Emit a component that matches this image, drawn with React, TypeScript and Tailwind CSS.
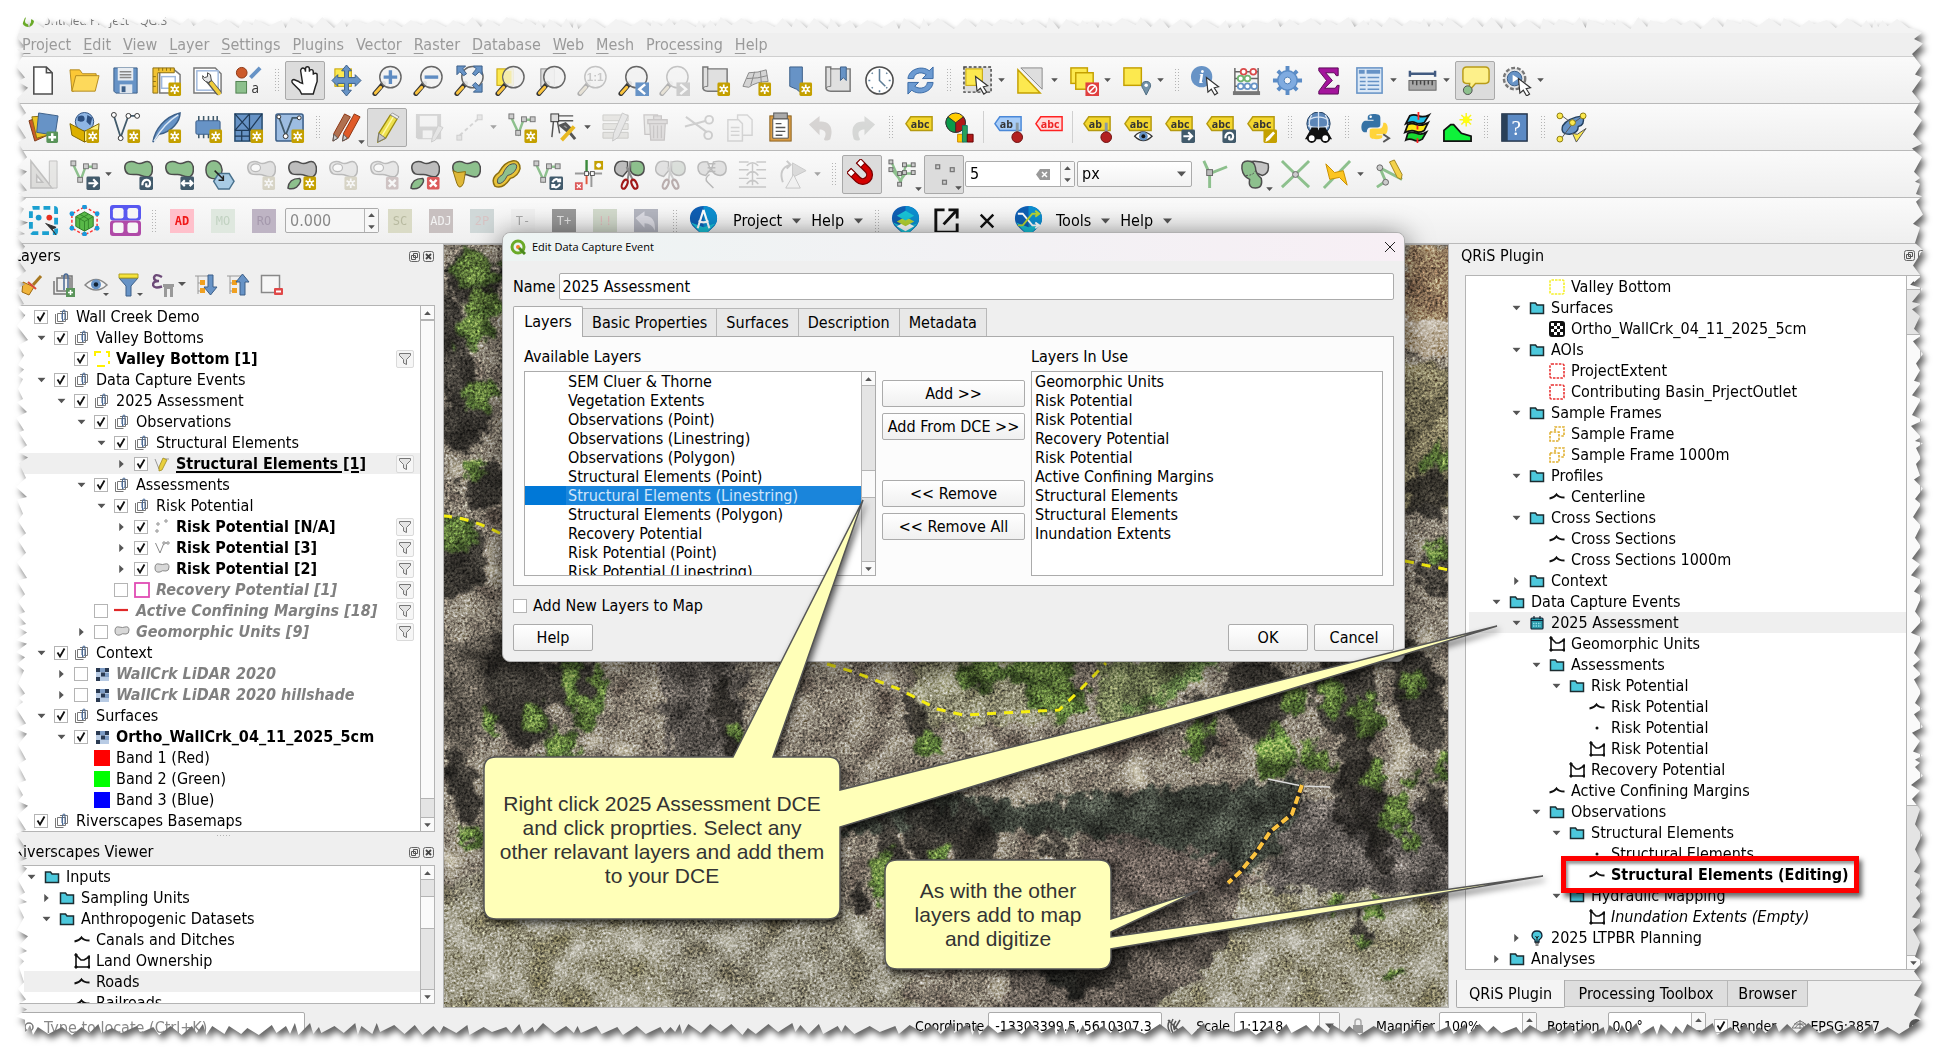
import type { ReactNode } from "react";

/* ---------- icon building blocks (32 x 32 grid) ---------- */

const BLUE = "#6793c6";
const GREEN = "#8dc08d";
const INK = "#4d4d4d";
const GOLD = "#fce94f";

function StarBadge() {
  return (
    <g>
      <rect x="18" y="18" width="13" height="14" rx="1.5" fill="#c4a000" />
      <path d="M24.5 20v10M20.2 22.5l8.6 5M20.2 27.5l8.6-5" stroke="#fff" strokeWidth="1.8" />
      <circle cx="24.5" cy="25" r="2.6" fill="#fff" />
      <circle cx="24.5" cy="25" r="1.2" fill="#c4a000" />
    </g>
  );
}

function SteelBadge({ d }: { d: string }) {
  return (
    <g>
      <rect x="18" y="18" width="14" height="14" rx="1.5" fill="#415a6b" />
      <path d={d} fill="none" stroke="#fff" strokeWidth="2.2" />
    </g>
  );
}

function RedBadge() {
  return (
    <g>
      <rect x="18.5" y="18.5" width="13" height="13" rx="1.5" fill="#dc5a5a" />
      <path d="M21.5 21.5l7 7M28.5 21.5l-7 7" stroke="#fff" strokeWidth="2.5" />
    </g>
  );
}

function Lens({ children }: { children?: ReactNode }) {
  return (
    <g>
      <path d="M12 19L3 29.5" stroke="#333" strokeWidth="5" strokeLinecap="round" />
      <path d="M9 23L3.5 29" stroke="#fcc53e" strokeWidth="3" strokeLinecap="round" />
      <circle cx="19" cy="12.5" r="11" fill="#f2f2f2" fillOpacity="0.9" stroke="#666" strokeWidth="1.5" />
      {children}
    </g>
  );
}

function Cursor({ x, y }: { x: number; y: number }) {
  return <path d={`M${x} ${y}l1.5 15 3.5-3 3.5 6 3-2-3.5-5.5 4.5-1z`} fill="#fff" stroke="#333" strokeWidth="1.2" />;
}

function Tag({ fill = "#f3d62e", stroke = "#b59a10", color = "#333", text = "abc" }: { fill?: string; stroke?: string; color?: string; text?: string }) {
  return (
    <g>
      <path d="M2 12L7 5h22v14H7z" fill={fill} stroke={stroke} strokeWidth="1.5" />
      <text x="7" y="16" fontSize="11" fontWeight="700" fill={color} fontFamily="Open Sans, sans-serif">{text}</text>
    </g>
  );
}

function Blob({ fill = GREEN, hole = false }: { fill?: string; hole?: boolean }) {
  return (
    <g>
      <path d="M3 10C2 3 9 1 15 4s8-3 13-1c5 3 4 13 0 15-5 2-8-2-13-2C9 16 4 17 3 10z" fill={fill} stroke={INK} strokeWidth="1.6" />
      {hole ? <ellipse cx="11" cy="9" rx="5" ry="4" fill="#fff" stroke={INK} strokeWidth="1.2" /> : null}
    </g>
  );
}

function Nodes() {
  return (
    <g>
      <path d="M4 5l8 17 5-14h10" fill="none" stroke={GREEN} strokeWidth="2.5" />
      {[[2, 2], [9, 19], [15, 5], [24, 5]].map(([x, y]) => (
        <rect key={`${x}-${y}`} x={x} y={y} width="5" height="5" fill="#ccc" stroke="#777" />
      ))}
    </g>
  );
}

function Pin() {
  return (
    <g>
      <path d="M25 11v10" stroke="#8a9aa5" strokeWidth="3" />
      <circle cx="25" cy="26" r="5.5" fill="#b32020" stroke="#701010" />
    </g>
  );
}

function Drop({ children }: { children: ReactNode }) {
  return (
    <g>
      <path d="M16 1c8 0 14 5 14 13 0 8-7 11-14 18C9 25 2 22 2 14 2 6 8 1 16 1z" fill="#0f5fb4" />
      <path d="M16 1c8 0 14 5 14 13 0 8-7 11-14 18z" fill="#0c8fd0" />
      <path d="M3 18l10 11 3 3 3-3 9-10-12 4z" fill="#19c3d8" />
      {children}
    </g>
  );
}

const icons: Record<string, ReactNode> = {
  "New project": <path d="M6 2h13l6 6v22H6zM19 2v6h6" fill="#fff" stroke={INK} strokeWidth="1.6" />,
  "Open project": (
    <g stroke="#b38a20">
      <path d="M1 5h10l3 4h14v4H8L5 27H3z" fill="#fbc735" />
      <path d="M7 11h24l-4 16H3z" fill="#fdd95b" />
    </g>
  ),
  "Save project": (
    <g>
      <path d="M4 3h24v26H6l-2-2z" fill={BLUE} stroke="#3c5f88" />
      <rect x="8" y="3" width="16" height="13" fill="#e9edf2" />
      <path d="M10 7h12M10 10h12M10 13h12" stroke="#888" strokeWidth="1.5" />
      <rect x="10" y="20" width="13" height="9" fill="#dfe6ee" />
      <rect x="12" y="22" width="4" height="6" fill="#3c5f88" />
    </g>
  ),
  "New print layout": (
    <g>
      <path d="M9 4h14l7 6v19H9z" fill="#fff" stroke="#777" strokeWidth="1.5" />
      <path d="M2 3h22v5H7v21H2z" fill="#f1c232" stroke="#8a6d10" />
      <path d="M8 3v3M12 3v3M16 3v3M20 3v3M2 12h3M2 17h3M2 22h3" stroke="#8a6d10" />
      <rect x="11" y="12" width="14" height="12" fill="none" stroke="#9fb8dd" strokeWidth="1.5" />
      <StarBadge />
    </g>
  ),
  "Layout manager": (
    <g>
      <path d="M2 3h22l6 6v20H2z" fill="#fff" stroke="#777" strokeWidth="1.5" />
      <rect x="5" y="6" width="22" height="20" fill="none" stroke="#9fb8dd" strokeWidth="1.5" />
      <path d="M17 16l10 12" stroke="#555" strokeWidth="6" strokeLinecap="round" />
      <path d="M20 19l8 10" stroke="#f0cd3c" strokeWidth="4" strokeLinecap="round" />
      <path d="M11 11q-1 4 3 6l3 1 3-2-1-6-3-2 0 4-3 1z" fill="#e4e4e4" stroke="#444" />
    </g>
  ),
  "Style manager": (
    <g>
      <circle cx="9" cy="8" r="5.5" fill="#cc5a2a" stroke="#8c3512" />
      <path d="M18 13L28 3" stroke={BLUE} strokeWidth="4" />
      <rect x="3" y="17" width="11" height="12" fill={GREEN} stroke="#4f7f4f" />
      <text x="19" y="29" fontSize="14" fill="#333" fontFamily="Open Sans, sans-serif">a</text>
    </g>
  ),
  "Pan map": (
    <path d="M9 17L4 15c-2 0-3 2-1 4l7 7 2 4h12l2-7 2-6V10c0-2-4-2-4 0V7c0-3-4-3-4 0V4c0-3-4-3-4 0v3c0-5-5-5-5-1l2 13-3-1z" fill="#fff" stroke="#222" strokeWidth="1.5" />
  ),
  "Pan to selection": (
    <g>
      <rect x="4" y="4" width="17" height="18" fill={GOLD} stroke="#c4a000" />
      <path d="M16 0l5 6h-3v7h7v-3l6 6-6 6v-3h-7v7h3l-5 6-5-6h3v-7H7v3l-6-6 6-6v3h7V6h-3z" fill={BLUE} stroke="#3c5f88" />
    </g>
  ),
  "Zoom in": <Lens><path d="M19 5.5v14M12 12.5h14" stroke="#5f8cc2" strokeWidth="3.5" /></Lens>,
  "Zoom out": <Lens><path d="M12 12.5h14" stroke="#5f8cc2" strokeWidth="3.5" /></Lens>,
  "Zoom full": (
    <g>
      <Lens />
      <path d="M3 1h9L9 4l4 5-3 2-4-4-3 3zM29 1h-9l3 3-4 5 3 2 4-4 3 3zM29 28h-9l3-3-4-4 3-3 4 4 3-3z" fill={BLUE} stroke="#3c5f88" />
    </g>
  ),
  "Zoom to selection": (
    <g>
      <rect x="2" y="4" width="17" height="17" fill={GOLD} stroke="#c4a000" />
      <Lens />
      <path d="M11 6a11 11 0 0 0 0 13h6V6z" fill="#f4ecac" />
    </g>
  ),
  "Zoom to layer": (
    <g>
      <rect x="5" y="4" width="14" height="18" fill="#ddd" stroke="#888" />
      <Lens />
    </g>
  ),
  "Zoom to native": (
    <g>
      <Lens />
      <text x="10" y="17" fontSize="12" fontWeight="700" fill="#777" fontFamily="Liberation Sans, sans-serif">1:1</text>
    </g>
  ),
  "Zoom last": (
    <g>
      <Lens />
      <rect x="18" y="18" width="14" height="14" fill={BLUE} />
      <path d="M28 20l-6 5 6 5" fill="none" stroke="#fff" strokeWidth="2.5" />
    </g>
  ),
  "Zoom next": (
    <g>
      <Lens />
      <rect x="18" y="18" width="14" height="14" fill="#888" />
      <path d="M22 20l6 5-6 5" fill="none" stroke="#fff" strokeWidth="2.5" />
    </g>
  ),
  "New map view": (
    <g>
      <path d="M8 4h20v23H8q-5 0-5-4V2h5z" fill="#e0e0e0" stroke="#777" strokeWidth="1.5" />
      <path d="M8 4v18q-5 0-5 3" fill="none" stroke="#777" />
      <StarBadge />
    </g>
  ),
  "New 3D map view": (
    <g>
      <path d="M8 8q10 0 18-3l2 12q-12 0-20 6l-6-1z" fill="#d4d4d4" stroke="#888" />
      <path d="M14 7l-4 14M20 6l1 13M6 14q12 0 21-3" fill="none" stroke="#888" />
      <StarBadge />
    </g>
  ),
  "New bookmark": (
    <g>
      <path d="M8 2h13v28l-6-5-7-3z" fill={BLUE} stroke="#3c5f88" />
      <StarBadge />
    </g>
  ),
  "Show bookmarks": (
    <g>
      <path d="M8 4h20v23H8q-5 0-5-4V2h5z" fill="#e0e0e0" stroke="#777" strokeWidth="1.5" />
      <path d="M8 4v18q-5 0-5 3" fill="none" stroke="#777" />
      <path d="M18 2h6v14l-3-3-3 3z" fill={BLUE} stroke="#3c5f88" />
    </g>
  ),
  "Temporal controller": (
    <g>
      <circle cx="16" cy="16" r="14" fill="#fff" stroke={INK} strokeWidth="1.6" />
      <path d="M16 4v12l6 6M4.5 16h2M25.5 16h2M16 26v2M8 8l1 1M24 8l-1 1M8 24l1-1M24 24l-1-1" fill="none" stroke="#5c7c96" strokeWidth="1.6" />
    </g>
  ),
  "Refresh": (
    <g fill="#6c9bd2" stroke="#3a6aa5">
      <path d="M3 14C4 4 18 0 25 6l4-4v12H18l4-4C16 6 9 9 9 14z" />
      <path d="M29 18C28 28 14 32 7 26l-4 4V18h11l-4 4c6 4 13 1 13-4z" />
    </g>
  ),
  "Select features": (
    <g>
      <rect x="2" y="2" width="28" height="26" fill="#ddd" stroke="#444" strokeDasharray="3 2" strokeWidth="1.5" />
      <rect x="4" y="4" width="17" height="17" fill={GOLD} stroke="#c4a000" />
      <Cursor x={14} y={12} />
    </g>
  ),
  "Select by value": (
    <g>
      <path d="M6 3h22v22z" fill="#dedede" stroke="#888" />
      <path d="M3 5l23 24H3z" fill={GOLD} stroke="#c4a000" strokeWidth="1.5" />
    </g>
  ),
  "Deselect": (
    <g>
      <rect x="3" y="3" width="17" height="16" fill={GOLD} stroke="#c4a000" strokeWidth="1.5" />
      <rect x="8" y="8" width="18" height="17" fill={GOLD} stroke="#c4a000" strokeWidth="1.5" />
      <rect x="18" y="18" width="14" height="14" fill="#e04040" />
      <circle cx="25" cy="25" r="4.5" fill="none" stroke="#fff" strokeWidth="1.6" />
      <path d="M22 28l6-6" stroke="#fff" strokeWidth="1.6" />
    </g>
  ),
  "Select by location": (
    <g>
      <rect x="3" y="3" width="18" height="18" fill={GOLD} stroke="#c4a000" strokeWidth="1.5" />
      <path d="M26 17c6 0 5 6 3 8l-3 6-3-6c-2-2-3-8 3-8z" fill="#7392a8" stroke="#4c6a80" />
      <circle cx="26" cy="21" r="1.8" fill="#fff" />
    </g>
  ),
  "Identify": (
    <g>
      <circle cx="12" cy="12" r="11" fill={BLUE} />
      <text x="9" y="19" fontSize="19" fontStyle="italic" fontWeight="700" fill="#fff" fontFamily="Liberation Serif, serif">i</text>
      <Cursor x={17} y={13} />
    </g>
  ),
  "Field calculator": (
    <g>
      <path d="M4 3v25M28 3v25M4 7h24M4 14h24M4 22h24" stroke="#666" strokeWidth="1.5" />
      <rect x="2" y="27" width="28" height="4" fill="#777" />
      {[[13, 7, "#d94a4a"], [23, 7, "#d94a4a"], [10, 14, "#6fb36f"], [17, 14, "#6fb36f"], [10, 22, "#6793c6"], [17, 22, "#6793c6"], [24, 22, "#6793c6"]].map(([x, y, c]) => (
        <circle key={`${x}-${y}`} cx={x} cy={y} r="3" fill="#fff" stroke={String(c)} strokeWidth="1.8" />
      ))}
    </g>
  ),
  "Toolbox": (
    <g>
      <path d="M16 1v30M1 16h30M6 6l20 20M26 6L6 26" stroke="#5b8cc6" strokeWidth="4" />
      <circle cx="16" cy="16" r="10" fill="#7fabe0" stroke="#5b8cc6" strokeWidth="1.5" />
      <circle cx="16" cy="16" r="3.5" fill="#f6f6f6" stroke="#4a7db8" />
    </g>
  ),
  "Statistics": <path d="M6 3h20v8h-2l-2-3H13l7 8-8 8h11l2-3h2l-1 9H6v-3l8-11-8-10z" fill="#a4149c" stroke="#5c0a58" />,
  "Attribute table": (
    <g>
      <rect x="3" y="3" width="26" height="26" fill="#dbe8f6" stroke={BLUE} strokeWidth="1.6" />
      <rect x="5" y="5" width="6" height="4" fill={BLUE} />
      <rect x="13" y="5" width="14" height="4" fill={BLUE} />
      <path d="M6 13h6M14 13h12M6 17h6M14 17h12M6 21h6M14 21h12M6 25h6M14 25h12" stroke={BLUE} strokeWidth="1.6" />
    </g>
  ),
  "Measure": (
    <g>
      <path d="M3 9h26M3 6v6M29 6v6" stroke="#415a80" strokeWidth="2.5" />
      <rect x="2" y="16" width="28" height="10" fill="#a8a8a8" stroke="#666" />
      <path d="M6 16v4M10 16v5M14 16v4M18 16v5M22 16v4M26 16v5" stroke="#444" strokeWidth="1.5" />
    </g>
  ),
  "Map tips": (
    <g>
      <path d="M7 2h19q4 0 4 4v9q0 4-4 4H16l-7 8 1-8H7q-4 0-4-4V6q0-4 4-4z" fill="#fdf08a" stroke="#b89b18" strokeWidth="1.5" />
      <circle cx="8" cy="26" r="4.5" fill={GREEN} stroke={INK} />
    </g>
  ),
  "Run action": (
    <g>
      <circle cx="14" cy="14" r="11" fill="#e6e6e6" stroke="#777" strokeWidth="2.5" strokeDasharray="4 2" />
      <circle cx="14" cy="14" r="7.5" fill={BLUE} stroke="#3c5f88" />
      <path d="M12 10l6 4-6 4z" fill="#fff" />
      <Cursor x={18} y={14} />
    </g>
  ),
  "Data source manager": (
    <g>
      <path d="M1 9l14-5 5 20-13 6z" fill="#cc5a2a" stroke="#7c3a18" />
      <path d="M4 5l14-1 2 20-11 3z" fill="#edc626" stroke="#8a6d10" />
      <path d="M11 1l20 3-3 20-19-3z" fill={BLUE} stroke="#3c5f88" />
      <rect x="19" y="20" width="12" height="12" rx="1.5" fill="#5a945a" />
      <path d="M25 22v8M21 26h8" stroke="#fff" strokeWidth="2.5" />
    </g>
  ),
  "New GeoPackage": (
    <g>
      <circle cx="16" cy="10" r="9.5" fill="#8fb6e4" stroke="#2c4f80" />
      <path d="M9 5q6-3 7 1t-4 4l-3-1zM19 3l5 3-2 8-4-4z" fill="#2c4f80" />
      <path d="M1 12l15 8v11L3 24z" fill="#dcb000" stroke="#806600" />
      <path d="M31 12l-15 8v11l14-7z" fill="#fff07a" stroke="#806600" />
      <StarBadge />
    </g>
  ),
  "New shapefile": (
    <g>
      <path d="M4 4l7 22L19 4h8" fill="none" stroke="#415a6b" strokeWidth="1.8" />
      <circle cx="4" cy="3" r="2.5" fill="#fff" stroke="#333" />
      <circle cx="19" cy="4" r="2.5" fill="#fff" stroke="#333" />
      <circle cx="28" cy="4" r="2.5" fill="#fff" stroke="#333" />
      <circle cx="11" cy="27" r="2.5" fill="#fff" stroke="#333" />
      <StarBadge />
    </g>
  ),
  "New SpatiaLite": (
    <g>
      <path d="M2 31C4 18 14 5 30 1c0 8-8 20-22 22z" fill={BLUE} stroke="#3c5f88" strokeWidth="1.5" />
      <path d="M3 30C10 18 18 9 28 3" fill="none" stroke="#dbe8f6" strokeWidth="1.5" />
      <StarBadge />
    </g>
  ),
  "New temporary layer": (
    <g>
      <path d="M7 4v6M12 4v6M17 4v6M22 4v6M26 4v6M7 20v7M12 20v7M17 20v7" stroke="#415a6b" strokeWidth="1.6" />
      <rect x="4" y="9" width="25" height="14" rx="1.5" fill={BLUE} stroke="#3c5f88" />
      <StarBadge />
    </g>
  ),
  "New mesh": (
    <g>
      <rect x="2" y="2" width="28" height="28" fill={BLUE} stroke="#2c4f70" strokeWidth="1.6" />
      <path d="M2 19h28M17 2v28M2 2l15 17M17 2L2 19M30 2L17 19M2 25h15M9 19v11" stroke="#1f3a58" strokeWidth="1.3" />
      <StarBadge />
    </g>
  ),
  "New virtual layer": (
    <g>
      <rect x="2" y="2" width="28" height="28" rx="2" fill="#9dbde2" stroke="#3c5f88" strokeWidth="1.6" />
      <path d="M5 5l7 19L19 6h7" fill="none" stroke="#415a6b" strokeWidth="1.8" />
      <circle cx="12" cy="25" r="2.5" fill="#fff" stroke="#333" />
      <circle cx="5" cy="5" r="2" fill="#fff" stroke="#333" />
      <circle cx="26" cy="6" r="2" fill="#fff" stroke="#333" />
      <StarBadge />
    </g>
  ),
  "Current edits": (
    <g stroke="#8c3512">
      <path d="M14 2l6 3L7 27l-5 3 1-8z" fill="#b07050" />
      <path d="M24 2l6 3-12 22-6 3 1-8z" fill="#e05a28" />
      <path d="M3 23l4 4-5 3zM13 23l4 4-5 3z" fill="#ccc" stroke="#555" />
    </g>
  ),
  "Toggle editing": (
    <g>
      <path d="M19 3l7 4L14 27l-8 4 1-9z" fill="#ede04c" stroke="#9a8a10" strokeWidth="1.3" />
      <path d="M22 5L10 25" stroke="#fff8a8" strokeWidth="1.5" />
      <path d="M7 22l7 5-8 4z" fill="#c8c8c8" stroke="#777" />
      <path d="M19 3l2-2 7 4-2 2z" fill="#eee" stroke="#999" />
    </g>
  ),
  "Save edits": (
    <g>
      <path d="M3 2h26v26H5l-2-2z" fill="#999" />
      <rect x="7" y="4" width="18" height="11" fill="#eee" />
      <rect x="10" y="19" width="10" height="8" fill="#eee" />
      <path d="M26 14l5 2-8 13-4 2 1-5z" fill="#ccc" stroke="#888" />
    </g>
  ),
  "Digitize with segment": (
    <g>
      <path d="M6 24L25 7" stroke="#999" strokeWidth="2" strokeDasharray="4 3" />
      <rect x="3" y="24" width="5" height="5" fill="#ccc" stroke="#888" />
      <rect x="24" y="3" width="5" height="5" fill="#ccc" stroke="#888" />
    </g>
  ),
  "Add line feature": <g><Nodes /><StarBadge /></g>,
  "Vertex tool": (
    <g>
      <path d="M6 6l-2 20M9 6l3 16M8 4h18M8 9h18" stroke="#555" strokeWidth="1.5" />
      <rect x="3" y="2" width="8" height="8" fill="#ddd" stroke="#333" />
      <path d="M13 14l5-2 4 4-3 3zM19 17l9 11" stroke="#555" strokeWidth="3" fill="#999" />
      <path d="M27 15L14 29" stroke="#e8b820" strokeWidth="4" />
    </g>
  ),
  "Modify attributes": (
    <g>
      <path d="M2 3h26v6H2zM2 12h26v6H2zM2 21h26v6H2z" fill="#cfc9a8" stroke="#8a8668" />
      <path d="M22 1l6 3-10 22-6 4 1-8z" fill="#ccc" stroke="#777" />
    </g>
  ),
  "Delete selected": (
    <g fill="#c8b0b0" stroke="#8a7070" strokeWidth="1.3">
      <path d="M2 3h14v20H3z" fill="#dad6ca" />
      <path d="M6 8h20v4H6zM8 12h16l-1 17H9zM12 8V4h8v4" />
      <path d="M12 14v13M16 14v13M20 14v13" />
    </g>
  ),
  "Cut": (
    <g fill="none" stroke="#888" strokeWidth="2">
      <path d="M3 5l22 16M2 15l22-6" />
      <circle cx="27" cy="8" r="4" />
      <circle cx="26" cy="24" r="4" />
    </g>
  ),
  "Copy": (
    <g fill="#f4f4f4" stroke="#999" strokeWidth="1.5">
      <path d="M14 3h10l5 5v16H14z" />
      <path d="M4 8h11l4 4v18H4z" />
      <path d="M7 16h9M7 20h9M7 24h9" />
    </g>
  ),
  "Paste": (
    <g>
      <rect x="5" y="4" width="22" height="26" fill="#d99c45" stroke="#8c6220" />
      <path d="M8 7h16v20H8z" fill="#fff" stroke="#555" />
      <rect x="9" y="1" width="14" height="6" fill="#aaa" stroke="#555" />
      <path d="M11 12h6M11 16h10M11 20h10M11 24h7" stroke="#555" strokeWidth="1.5" />
    </g>
  ),
  "Undo": <path d="M3 13l11-9v6c10-1 15 6 11 18-2 2-8 2-6-1 3-6 0-9-5-9v6z" fill="#b09488" />,
  "Redo": <path d="M29 13L18 4v6C8 9 3 16 7 28c2 2 8 2 6-1-3-6 0-9 5-9v6z" fill="#98a898" />,
  "Label options": <Tag />,
  "Diagram options": (
    <g>
      <circle cx="11" cy="11" r="10" fill="#fc0" stroke="#333" />
      <path d="M11 11v10A10 10 0 0 1 3 5z" fill="#0a9a4a" stroke="#333" />
      <path d="M11 11l8-6a10 10 0 0 1-8 16z" fill="#b01818" stroke="#333" />
      <path d="M13 23h6v8h-6z" fill="#fc0" stroke="#c80" />
      <path d="M18 14h5v17h-5z" fill="#2aa05a" stroke="#176" />
      <path d="M23 23h6v8h-6z" fill="#b01818" stroke="#600" />
    </g>
  ),
  "Highlight pinned labels": <g><Tag fill="#a8cdf8" stroke="#4a88d8" text="ab" /><Pin /></g>,
  "Unplaced labels": <Tag fill="#ffdada" stroke="#f22" color="#e22" />,
  "Pin labels": <g><Tag text="ab" /><Pin /></g>,
  "Show hide labels": (
    <g>
      <Tag />
      <path d="M12 25q8-9 18 0-9 9-18 0z" fill="#fff" stroke="#333" strokeWidth="1.3" />
      <circle cx="21" cy="25" r="4.5" fill={BLUE} />
      <circle cx="21" cy="25" r="2" fill="#111" />
    </g>
  ),
  "Move label": <g><Tag /><SteelBadge d="M20 25h8M25 21l4 4-4 4" /></g>,
  "Rotate label": <g><Tag /><SteelBadge d="M21 27c0-7 8-7 8-2s-4 3-4 3v-3" /></g>,
  "Change label": (
    <g>
      <Tag />
      <rect x="18" y="18" width="14" height="14" rx="1.5" fill="#c4a000" />
      <path d="M28 20l2 2-6 7-4 2 1-4z" fill="#fff" />
    </g>
  ),
  "Metasearch": (
    <g>
      <circle cx="16" cy="12" r="12" fill="#5c86b8" stroke="#24405f" />
      <path d="M6 8q10-6 20 0M5 14q11 4 22 0M16 0v22M9 3q-5 8 0 16M23 3q5 8 0 16" fill="none" stroke="#d8e4f2" strokeWidth="1.3" />
      <path d="M9 16h6l1 3 1-3h6l7 12H2z" fill="#111" />
      <circle cx="9" cy="27" r="4" fill="#fff" stroke="#111" strokeWidth="2" />
      <circle cx="23" cy="27" r="4" fill="#fff" stroke="#111" strokeWidth="2" />
    </g>
  ),
  "Python console": (
    <g>
      <path d="M14 2c5 0 7 1 7 4v7q0 3-3 3h-7q-4 0-4 5H4c-4-2-3-11 1-12h9V8H8V5c0-2 2-3 6-3z" fill="#3572a5" />
      <path d="M17 28c-5 0-7-1-7-4v-5q0-2 3-2h7q4 0 4-6h2c4 2 3 11 0 12h-9v1h6v2c0 1-2 2-6 2z" fill="#ffd43b" />
      <circle cx="11" cy="5" r="1.3" fill="#fff" />
      <path d="M24 23l6 4-6 4" fill="none" stroke="#555" strokeWidth="2" />
    </g>
  ),
  "Stacked layers": (
    <g stroke="#111" strokeWidth="1.8">
      <path d="M7 22q4-2 9 0t10-1l-4 7q-5 3-9 1t-8 0z" fill="#18d830" />
      <path d="M7 13q4-2 9 0t12-2l-4 8q-5 3-9 1t-11 1z" fill="#f8e818" />
      <path d="M9 4q4-2 9 0t11-1l-5 8q-5 2-9 0T5 12z" fill="#20c0e8" />
      <path d="M18 0v8M17 14v4M17 27v5" stroke="#f22" />
    </g>
  ),
  "Terrain": (
    <g>
      <path d="M2 30V19l7-6h3l8 9 10 3v5z" fill="#0ff23a" stroke="#111" strokeWidth="1.8" />
      <path d="M25 1v14M18 8h13M20 3l10 10M30 3L20 13" stroke="#f8f420" strokeWidth="1.5" />
      <circle cx="25" cy="8" r="3.5" fill="#ff1" />
    </g>
  ),
  "Help contents": (
    <g>
      <rect x="3" y="2" width="26" height="28" fill="#5c8ac4" stroke="#24344a" strokeWidth="1.5" />
      <rect x="3" y="2" width="6" height="28" fill="#2a4058" />
      <text x="13" y="24" fontSize="22" fill="#fff" fontFamily="Liberation Serif, serif">?</text>
    </g>
  ),
  "Topology checker": (
    <g>
      <path d="M7 14Q12 6 28 4q2 10-5 11 0 7-9 8-10 0-7-9z" fill={BLUE} stroke="#24405f" strokeWidth="1.5" />
      <path d="M5 3l12 9 11-8M17 12L5 28" fill="none" stroke="#555" />
      {[[4, 4], [17, 11], [28, 4], [4, 28]].map(([x, y]) => (
        <circle key={`${x}-${y}`} cx={x} cy={y} r="3" fill={GOLD} stroke="#8a7a10" />
      ))}
      <path d="M17 22l4 9 10-14-9 6z" fill={GOLD} stroke="#555" />
    </g>
  ),
  "Advanced digitizing": (
    <g stroke="#66615a">
      <path d="M3 2v28h22zM9 17v7h6z" fill="#b9b4a4" strokeWidth="1.6" fillRule="evenodd" />
      <path d="M22 2h8v28h-5l-3-4z" fill="#d0ccb8" />
    </g>
  ),
  "Move feature": <g><Nodes /><SteelBadge d="M20 25h8M25 21l4 4-4 4" /></g>,
  "Rotate feature": <g><Blob /><SteelBadge d="M21 27c0-7 8-7 8-2s-4 3-4 3v-3" /></g>,
  "Scale feature": <g><Blob /><SteelBadge d="M20 25h10M22.5 22l-3 3 3 3M27.5 22l3 3-3 3" /></g>,
  "Simplify feature": (
    <g>
      <path d="M2 11C2 4 7 1 12 2s8 8 6 13-6 6-10 5-6-4-6-9z" fill={GREEN} stroke={INK} strokeWidth="1.5" />
      <path d="M15 15h11l5 8-5 8H15l-5-8z" fill="#a8cbe4" stroke="#48708c" strokeWidth="1.5" />
      <path d="M11 12l9 9M20 17v5h-5" fill="none" stroke="#222" strokeWidth="1.5" />
    </g>
  ),
  "Add ring": <g><Blob fill="#bbb" hole /><StarBadge /></g>,
  "Add part": (
    <g>
      <Blob fill="#bdbdbd" />
      <path d="M2 30q1-10 12-10 3 3-3 9-5 3-9 1z" fill={GREEN} stroke={INK} strokeWidth="1.5" />
      <StarBadge />
    </g>
  ),
  "Fill ring": <g><Blob fill="#ccc" hole /><StarBadge /></g>,
  "Delete ring": <g><Blob fill="#ccc" hole /><RedBadge /></g>,
  "Delete part": (
    <g>
      <Blob fill="#bdbdbd" />
      <path d="M2 30q1-10 12-10 3 3-3 9-5 3-9 1z" fill={GREEN} stroke={INK} strokeWidth="1.5" />
      <RedBadge />
    </g>
  ),
  "Reshape": (
    <g>
      <Blob />
      <path d="M3 12l5 2 8-1-2 12q-4 8-7 0z" fill="#e0b838" stroke="#8a6d10" />
    </g>
  ),
  "Offset curve": (
    <g>
      <path d="M4 28Q-1 20 8 14 14 3 22 2t8 8q-2 8-10 10-8 12-16 8z" fill="#e8c33a" stroke="#8a6d10" strokeWidth="1.5" />
      <path d="M7 25q-2-5 5-9Q16 6 22 5t4 5q-3 6-9 7-5 10-10 8z" fill={GREEN} stroke={INK} />
    </g>
  ),
  "Reverse line": <g><Nodes /><SteelBadge d="M21 24q4-6 8-1M29 26q-4 6-8 1M29 20v3h-3M21 30v-3h3" /></g>,
  "Trim extend": (
    <g>
      <path d="M14 1v13" stroke="#3c8a3c" strokeWidth="2.5" />
      <path d="M2 15h28M19 15v14" stroke="#999" strokeWidth="2" />
      <path d="M14 16v10" stroke="#e0583c" strokeWidth="2" />
      <rect x="2" y="24" width="8" height="8" fill="#dc5a5a" />
      <path d="M4 26l4 4M8 26l-4 4" stroke="#fff" strokeWidth="1.3" />
      <rect x="22" y="2" width="9" height="9" fill="#c4a000" />
      <circle cx="26.5" cy="6.5" r="2.5" fill="#fff" />
      <rect x="12" y="13" width="4" height="4" fill="#fff" stroke="#555" />
      <rect x="18" y="13" width="4" height="4" fill="#fff" stroke="#555" />
    </g>
  ),
  "Split features": (
    <g>
      <path d="M14 3Q3 0 1 8t8 10l5-6z" fill="#bdbdbd" stroke={INK} strokeWidth="1.5" />
      <path d="M17 3q13-3 14 5t-6 9q-6 0-8-5z" fill={GREEN} stroke={INK} strokeWidth="1.5" />
      <path d="M17 2l-3 20M13 8l7 15" stroke="#888" strokeWidth="2" />
      <ellipse cx="11" cy="26" rx="2.5" ry="5" fill="none" stroke="#a01818" strokeWidth="2.2" transform="rotate(25 11 26)" />
      <ellipse cx="21" cy="26" rx="2.5" ry="5" fill="none" stroke="#a01818" strokeWidth="2.2" transform="rotate(-25 21 26)" />
    </g>
  ),
  "Merge features": (
    <g>
      <path d="M12 3Q2 2 2 9t8 8l5-6zM18 3q12-3 13 5t-6 9q-6 0-9-6z" fill="#bbb" stroke={INK} strokeWidth="1.5" />
      <path d="M12 5h8M12 9h8M12 13h8M14 16q-6 4-2 8l6 6" fill="none" stroke={INK} strokeWidth="1.5" />
    </g>
  ),
  "Merge attributes": <path d="M2 3h10M20 3h10M2 11h10M20 11h10M2 20h10M20 20h10M2 29h28M10 7q6-6 12 0M10 17q6-8 12 0M10 26q6-8 12 0M16 5v22" fill="none" stroke="#777" strokeWidth="1.5" />,
  "Rotate symbols": (
    <g fill="#aaa" stroke="#777">
      <path d="M15 4l14 8-14 7z" />
      <path d="M8 30l8-14 7 14z" fill="#eee" />
      <path d="M5 24Q0 10 12 6M9 2l4 4-4 4" fill="none" strokeWidth="2" />
    </g>
  ),
  "Enable snapping": (
    <g transform="translate(1 1) rotate(-45 16 16)">
      <path d="M6 2h6v13a4 4 0 0 0 8 0V2h6v13a10 10 0 0 1-20 0z" fill="#d40000" stroke="#7a0000" strokeWidth="1.3" />
      <path d="M6 2h6v6H6zM20 2h6v6h-6z" fill="#fff" stroke="#7a0000" />
    </g>
  ),
  "Snap mode": (
    <g>
      <path d="M4 4l9 20 5-16M5 12l8 10 5-7M18 7h10M18 15h10" fill="none" stroke={GREEN} strokeWidth="2.5" />
      {[[1, 1], [1, 9], [10, 13], [10, 24], [15, 4], [24, 4], [15, 12], [24, 12]].map(([x, y]) => (
        <rect key={`${x}-${y}`} x={x} y={y} width="4" height="4" fill="#ccc" stroke="#666" />
      ))}
    </g>
  ),
  "Snap type": (
    <g fill="#ccc" stroke="#777" strokeWidth="1.3">
      <rect x="7" y="6" width="4" height="4" />
      <rect x="22" y="9" width="4" height="4" />
      <rect x="14" y="22" width="4" height="4" />
    </g>
  ),
  "Topological editing": (
    <g>
      <path d="M6 2l6 13v15M12 15l18-7" fill="none" stroke={GREEN} strokeWidth="3" />
      <rect x="9" y="11" width="6" height="6" fill="#bbb" stroke="#666" />
    </g>
  ),
  "Avoid overlap": (
    <g>
      <path d="M5 4q12-4 25 1 2 10-6 12L12 12z" fill="#c4c4c4" stroke={INK} strokeWidth="1.5" />
      <path d="M3 10q-1-8 6-8t8 7q0 6 6 11 2 10-6 10t-6-9Q4 18 3 10z" fill={GREEN} stroke={INK} strokeWidth="1.5" />
      <path d="M7 17q8 0 10-5" fill="none" stroke={INK} strokeDasharray="2 1.5" />
    </g>
  ),
  "Snap intersection": (
    <g>
      <path d="M2 2q10 10 28 27M30 2Q18 14 2 29" fill="none" stroke={GREEN} strokeWidth="3" />
      <circle cx="16" cy="16" r="3" fill="#ccc" stroke="#666" />
    </g>
  ),
  "Tracing": (
    <g>
      <path d="M30 2L3 30" stroke={GREEN} strokeWidth="3" />
      <path d="M5 5l9 9 9-2 4 15-8-8-10 2z" fill="#fcc520" stroke="#c89000" />
    </g>
  ),
  "Self snapping": (
    <g>
      <path d="M6 9l6 14-9 6M6 9l23 12" fill="none" stroke={GREEN} strokeWidth="3" />
      <circle cx="6" cy="9" r="3" fill="#ccc" stroke="#666" />
      <circle cx="12" cy="24" r="3" fill="#ccc" stroke="#666" />
      <path d="M16 3l5-2 8 15-1 5-4-2z" fill="#f4d24a" stroke="#a08420" />
    </g>
  ),
  "Select region": (
    <g>
      <rect x="3" y="3" width="26" height="26" rx="2" fill="none" stroke="#1ba0d0" strokeWidth="4" strokeDasharray="7 4" />
      <circle cx="11" cy="13" r="3" fill="#1a98cc" />
      <circle cx="22" cy="13" r="3" fill="#e83020" />
      <path d="M18 19l11 4-4 2 4 6" fill="#333" stroke="#333" />
    </g>
  ),
  "Voxel cube": (
    <g>
      <path d="M16 2l13 7v15l-13 7-13-7V9z" fill="none" stroke="#f33" strokeWidth="1.5" strokeDasharray="3 2" />
      <path d="M16 7l9 5v10l-9 5-9-5V12z" fill="#58b848" stroke="#2c7a24" />
      <path d="M7 12l9 5 9-5M16 17v10M11 9.5l9 5v10M20 9.5l-9 5v10" fill="none" stroke="#2c7a24" strokeWidth="0.8" />
      {[[16, 2], [29, 9], [29, 24], [16, 30], [3, 24], [3, 9]].map(([x, y]) => (
        <circle key={`${x}-${y}`} cx={x} cy={y} r="2.5" fill="#1a98dc" />
      ))}
    </g>
  ),
  "Tile grid": (
    <g>
      <rect x="0" y="0" width="32" height="16" rx="3" fill="#5858f0" />
      <rect x="0" y="16" width="32" height="16" rx="3" fill="#b04aa8" />
      {[[3, 3], [18, 3], [3, 18], [18, 18]].map(([x, y]) => (
        <rect key={`${x}-${y}`} x={x} y={y} width="11" height="11" rx="2.5" fill="#f6f6f6" />
      ))}
    </g>
  ),
  "Riverscapes project": <Drop><path d="M16 5l-6 19M16 5l6 19M11 16q5 4 10 0" fill="none" stroke="#fff" strokeWidth="2.2" /></Drop>,
  "Riverscapes layers": (
    <Drop>
      <path d="M16 17l9 5-9 5-9-5z" fill="#fff" />
      <path d="M16 12l9 5-9 5-9-5z" fill="#b5d334" />
      <path d="M16 6l9 5-9 5-9-5z" fill="#18c4d8" />
    </Drop>
  ),
  "Riverscapes tools": (
    <Drop>
      <path d="M5 9h5l10 12h6M23 18l4 3-4 3" fill="none" stroke="#fff" strokeWidth="2" />
      <path d="M5 21h5L20 9h6M23 6l4 3-4 3" fill="none" stroke="#b5d334" strokeWidth="2" />
    </Drop>
  ),
  "Open external": <path d="M14 5H5v23h22v-9M18 5h9v9M27 5L13 20" fill="none" stroke="#111" strokeWidth="3" />,
  "Close project": <path d="M9 10l13 13M22 10L9 23" stroke="#111" strokeWidth="2.5" />,
};

type Tool = "grip" | "sep" | { id: string; menu?: boolean; corner?: boolean; on?: boolean; off?: boolean };

const t = (id: string): Tool => ({ id });
const off = (id: string): Tool => ({ id, off: true });
const menu = (id: string): Tool => ({ id, menu: true });

const projectTools: Tool[] = [
  t("New project"), t("Open project"), t("Save project"), t("New print layout"), t("Layout manager"), t("Style manager"), "grip",
  { id: "Pan map", on: true }, t("Pan to selection"), t("Zoom in"), t("Zoom out"), t("Zoom full"), t("Zoom to selection"), t("Zoom to layer"),
  off("Zoom to native"), t("Zoom last"), off("Zoom next"), t("New map view"), t("New 3D map view"), t("New bookmark"), t("Show bookmarks"),
  t("Temporal controller"), t("Refresh"), "grip",
  menu("Select features"), menu("Select by value"), menu("Deselect"), menu("Select by location"), "grip",
  t("Identify"), t("Field calculator"), t("Toolbox"), t("Statistics"), menu("Attribute table"), menu("Measure"),
  { id: "Map tips", on: true }, menu("Run action"),
];

const editTools: Tool[] = [
  t("Data source manager"), t("New GeoPackage"), t("New shapefile"), t("New SpatiaLite"), t("New temporary layer"), t("New mesh"), t("New virtual layer"), "grip",
  { id: "Current edits", corner: true }, { id: "Toggle editing", on: true }, off("Save edits"), { id: "Digitize with segment", menu: true, off: true },
  t("Add line feature"), menu("Vertex tool"), off("Modify attributes"), off("Delete selected"), off("Cut"), off("Copy"), t("Paste"), off("Undo"), off("Redo"), "grip",
  t("Label options"), t("Diagram options"), "sep", t("Highlight pinned labels"), t("Unplaced labels"), "sep",
  t("Pin labels"), t("Show hide labels"), t("Move label"), t("Rotate label"), t("Change label"), "grip",
  t("Metasearch"), "grip", t("Python console"), t("Stacked layers"), t("Terrain"), "grip", t("Help contents"), "grip", t("Topology checker"),
];

const shapeTools: Tool[] = [
  off("Advanced digitizing"), menu("Move feature"), t("Rotate feature"), t("Scale feature"), t("Simplify feature"), off("Add ring"), t("Add part"),
  off("Fill ring"), off("Delete ring"), t("Delete part"), t("Reshape"), t("Offset curve"), t("Reverse line"), t("Trim extend"), t("Split features"),
  off("Split features"), off("Merge features"), off("Merge attributes"), { id: "Rotate symbols", menu: true, off: true }, "grip",
  { id: "Enable snapping", on: true }, { id: "Snap mode", corner: true }, { id: "Snap type", on: true, corner: true },
];

const snapTools: Tool[] = [t("Topological editing"), { id: "Avoid overlap", corner: true }, t("Snap intersection"), menu("Tracing"), t("Self snapping")];

/* ---------- small pieces ---------- */

function Caret({ className = "" }: { className?: string }) {
  return (
    <svg viewBox="0 0 9 6" className={`h-1.5 w-[9px] shrink-0 ${className}`} aria-hidden="true">
      <path d="M0 0.5h9L4.5 5.5z" fill="#555" />
    </svg>
  );
}

function Grip() {
  return <span className="mx-[5px] h-6 w-[5px] shrink-0 bg-[radial-gradient(#b4b4b4_1px,transparent_1px)] bg-size-[3px_3px]" />;
}

function Icon({ id, off: dim = false }: { id: string; off?: boolean }) {
  return (
    <svg viewBox="0 0 32 32" className={`size-[31px] shrink-0 ${dim ? "opacity-35 grayscale-75" : ""}`} aria-hidden="true">
      {icons[id]}
    </svg>
  );
}

function Tools({ items }: { items: Tool[] }) {
  return (
    <>
      {items.map((item, i) => {
        if (item === "grip") return <Grip key={i} />;
        if (item === "sep") return <span key={i} className="mx-[2px] h-8 w-[2px] shrink-0 border-l border-[#d0d0d0]" />;
        return (
          <div key={i} className="flex shrink-0 items-center">
            <button
              type="button"
              aria-label={item.id}
              disabled={item.off}
              className={`relative grid h-[39px] w-10 place-items-center ${item.on ? "rounded-xs border border-[#a9a9a9] bg-[#dcdcdc]" : ""}`}
            >
              <Icon id={item.id} off={item.off} />
              {item.corner ? <Caret className="absolute right-0 bottom-0.5 scale-75" /> : null}
            </button>
            {item.menu ? <Caret className={`mr-[3px] scale-75 ${item.off ? "opacity-50" : ""}`} /> : null}
          </div>
        );
      })}
    </>
  );
}

function Bar({ children }: { children: ReactNode }) {
  return (
    <div className="flex h-[47px] items-center gap-px overflow-hidden border-b border-[#b9b9b9] bg-linear-to-b from-[#fafafa] to-[#efefef] pl-[23px]">
      {children}
    </div>
  );
}

function Spinner() {
  return (
    <span className="flex w-3.5 shrink-0 flex-col items-center justify-center gap-1.5 self-stretch border-l border-[#b4b4b4] bg-[#f7f7f7]">
      <Caret className="rotate-180 scale-75" />
      <Caret className="scale-75" />
    </span>
  );
}

function Chip({ text, className }: { text: string; className: string }) {
  return (
    <button type="button" disabled className={`mx-2 grid size-6 shrink-0 place-items-center font-['DejaVu_Sans_Mono',monospace] text-xs ${className}`}>
      {text}
    </button>
  );
}

function Check({ on, label }: { on: boolean; label: string }) {
  return (
    <span className="relative size-[14px] shrink-0">
      <input type="checkbox" defaultChecked={on} aria-label={label} className="block size-[14px] appearance-none border border-[#b4b4b4] bg-white" />
      {on ? (
        <svg viewBox="0 0 14 14" className="pointer-events-none absolute inset-0 size-[14px]" aria-hidden="true">
          <path d="M3.5 6.5l2.5 4 4.5-8" fill="none" stroke="#111" strokeWidth="1.8" />
        </svg>
      ) : null}
    </span>
  );
}

function DockButtons() {
  return (
    <span className="flex gap-[3px]">
      <button type="button" aria-label="Float panel">
        <svg viewBox="0 0 11 11" className="size-[11px]">
          <rect x="0.5" y="0.5" width="10" height="10" rx="2" fill="none" stroke="#666" />
          <path d="M4.5 2.5h4v4h-4zM2.5 4.5h4v4h-4z" fill="none" stroke="#555" />
        </svg>
      </button>
      <button type="button" aria-label="Close panel">
        <svg viewBox="0 0 11 11" className="size-[11px]">
          <rect x="0.5" y="0.5" width="10" height="10" rx="2" fill="none" stroke="#666" />
          <path d="M3 3l5 5M8 3L3 8" stroke="#444" strokeWidth="1.8" />
        </svg>
      </button>
    </span>
  );
}

function ScrollBar({ before, thumb, after }: { before: string; thumb: string; after: string }) {
  return (
    <div className="flex w-3.5 shrink-0 flex-col border-l border-[#b4b4b4] bg-[#e4e4e4]">
      <span className="grid h-3.5 shrink-0 place-items-center border-b border-[#b4b4b4] bg-[#fafafa]"><Caret className="rotate-180 scale-75" /></span>
      <span className={before} />
      <span className={`border-y border-[#b4b4b4] bg-[#fafafa] ${thumb}`} />
      <span className={after} />
      <span className="grid h-3.5 shrink-0 place-items-center border-t border-[#b4b4b4] bg-[#fafafa]"><Caret className="scale-75" /></span>
    </div>
  );
}

/* ---------- tree icons (16 x 16 grid) ---------- */

const glyphs: Record<string, ReactNode> = {
  group: (
    <g fill="none" stroke="#777">
      <path d="M1.5 5v9.5h8M3.5 4.5h8v8h-8zM6 2.5h7.5v8H12" />
      <path d="M8.5 12V3q0-2 1.5-2t1 2v7q-1.5 2-3 0V5" stroke="#4a6a96" />
    </g>
  ),
  valley: <path d="M1 5V1h6M12 1h3v5M15 10v3M3 15h8" fill="none" stroke="#fff200" strokeWidth="2" />,
  pencilLine: (
    <g>
      <path d="M1 3l4 10 5-10h5" fill="none" stroke="#999" />
      <path d="M9 2l4 2-5 10-3 1 0-4z" fill="#e8cf3c" stroke="#a08a20" strokeWidth="0.8" />
    </g>
  ),
  points: (
    <g fill="#fff" stroke="#888">
      <circle cx="4" cy="5" r="1.2" />
      <circle cx="12" cy="2" r="1.2" />
      <circle cx="3" cy="12" r="1.2" />
    </g>
  ),
  line: (
    <g fill="none" stroke="#888">
      <path d="M1.5 3L6 13l4-10h4" />
      <circle cx="10" cy="3" r="1.2" fill="#fff" />
      <circle cx="14" cy="3" r="1.2" fill="#fff" />
    </g>
  ),
  poly: <path d="M1 7q0-5 4-4t6 0q4-1 4 3t-3 4q-4-1-6 1-5 1-5-4z" fill="#d8d8d8" stroke="#888" />,
  pink: <rect x="1" y="1" width="14" height="14" fill="#fff" stroke="#e04cb4" strokeWidth="1.8" />,
  red: <path d="M0 7h14" stroke="#e02828" strokeWidth="2.2" />,
  raster: (
    <g>
      <rect x="2" y="2" width="13" height="13" fill="#b8cbe4" />
      <path d="M2 2h4v4H2zM11 2h4v4h-4zM2 11h4v4H2zM7 6.5h4v4H7z" fill="#2a3a52" />
      <path d="M6 2h5v4H6zM11 7h4v4h-4z" fill="#7e9cc4" />
    </g>
  ),
  bandRed: <rect width="16" height="16" fill="#f00" />,
  bandGreen: <rect width="16" height="16" fill="#0f0" />,
  bandBlue: <rect width="16" height="16" fill="#00f" />,
  folder: <path d="M1.5 3h5l1.5 2h6.5v8.5h-13z" fill="#4cc8dc" stroke="#1c2c30" strokeWidth="1.5" />,
  path: <path d="M0.5 9.5q5-1 7-4 2 3 8 3" fill="none" stroke="#111" strokeWidth="2" />,
  area: (
    <g fill="none" stroke="#111">
      <path d="M2 2l5 5h3l5-3v10H2z" strokeWidth="1.6" />
      <path d="M1 1h2v2H1zM14 3h2v2h-2zM14 13h2v2h-2zM1 13h2v2H1z" fill="#111" />
    </g>
  ),
  dot: <circle cx="8" cy="8" r="1.5" fill="#111" />,
  yellowBox: <rect x="1" y="1" width="14" height="14" rx="1.5" fill="none" stroke="#f5f02a" strokeWidth="1.6" strokeDasharray="2.5 1" />,
  redBox: <rect x="1" y="1" width="14" height="14" rx="1.5" fill="none" stroke="#e83030" strokeWidth="1.6" strokeDasharray="2.5 1.2" />,
  frames: <path d="M1 6h9v9H1zM6 5V1h9v9h-4" fill="none" stroke="#e0b030" strokeWidth="1.6" strokeDasharray="2.5 1.2" />,
  checker: (
    <g>
      <rect x="1" y="1" width="14" height="14" rx="2" fill="#111" stroke="#111" strokeWidth="2" />
      <path d="M2 2h3v3H2zM8 2h3v3H8zM5 5h3v3H5zM11 5h3v3h-3zM2 8h3v3H2zM8 8h3v3H8zM5 11h3v3H5zM11 11h3v3h-3z" fill="#fff" />
    </g>
  ),
  calendar: (
    <g>
      <rect x="2" y="3" width="12" height="11" rx="1" fill="#2a98a8" stroke="#112233" strokeWidth="1.2" />
      <path d="M2 5.5h12M5 1v3M11 1v3" stroke="#112233" strokeWidth="1.2" />
      <path d="M4 8.5h8M4 11h8" stroke="#8ee0ec" strokeWidth="1.5" strokeDasharray="1.5 1" />
    </g>
  ),
  bulb: (
    <g>
      <path d="M8 1q5 0 5 5 0 2-3 4v2H6v-2Q3 8 3 6q0-5 5-5z" fill="#4cc8dc" stroke="#112233" strokeWidth="1.3" />
      <path d="M6 13h4M6.5 15h3M6.5 6l1.5 2 1.5-2M8 8v3" fill="none" stroke="#111" />
    </g>
  ),
};

type Row = {
  level: number;
  label: string;
  glyph: string;
  open?: boolean;
  leaf?: boolean;
  check?: boolean;
  style?: string;
  filter?: boolean;
  current?: boolean;
};

const BOLD = "font-bold";
const GHOST = "font-bold italic text-[#808080]";

const layerRows: Row[] = [
  { level: 0, label: "Wall Creek Demo", glyph: "group", open: true, check: true },
  { level: 1, label: "Valley Bottoms", glyph: "group", open: true, check: true },
  { level: 2, label: "Valley Bottom [1]", glyph: "valley", leaf: true, check: true, style: BOLD, filter: true },
  { level: 1, label: "Data Capture Events", glyph: "group", open: true, check: true },
  { level: 2, label: "2025 Assessment", glyph: "group", open: true, check: true },
  { level: 3, label: "Observations", glyph: "group", open: true, check: true },
  { level: 4, label: "Structural Elements", glyph: "group", open: true, check: true },
  { level: 5, label: "Structural Elements [1]", glyph: "pencilLine", check: true, style: "font-bold underline decoration-2 underline-offset-2", filter: true, current: true },
  { level: 3, label: "Assessments", glyph: "group", open: true, check: true },
  { level: 4, label: "Risk Potential", glyph: "group", open: true, check: true },
  { level: 5, label: "Risk Potential [N/A]", glyph: "points", check: true, style: BOLD, filter: true },
  { level: 5, label: "Risk Potential [3]", glyph: "line", check: true, style: BOLD, filter: true },
  { level: 5, label: "Risk Potential [2]", glyph: "poly", check: true, style: BOLD, filter: true },
  { level: 4, label: "Recovery Potential [1]", glyph: "pink", leaf: true, check: false, style: GHOST, filter: true },
  { level: 3, label: "Active Confining Margins [18]", glyph: "red", leaf: true, check: false, style: GHOST, filter: true },
  { level: 3, label: "Geomorphic Units [9]", glyph: "poly", check: false, style: GHOST, filter: true },
  { level: 1, label: "Context", glyph: "group", open: true, check: true },
  { level: 2, label: "WallCrk LiDAR 2020", glyph: "raster", check: false, style: GHOST },
  { level: 2, label: "WallCrk LiDAR 2020 hillshade", glyph: "raster", check: false, style: GHOST },
  { level: 1, label: "Surfaces", glyph: "group", open: true, check: true },
  { level: 2, label: "Ortho_WallCrk_04_11_2025_5cm", glyph: "raster", open: true, check: true, style: BOLD },
  { level: 2, label: "Band 1 (Red)", glyph: "bandRed", leaf: true },
  { level: 2, label: "Band 2 (Green)", glyph: "bandGreen", leaf: true },
  { level: 2, label: "Band 3 (Blue)", glyph: "bandBlue", leaf: true },
  { level: 0, label: "Riverscapes Basemaps", glyph: "group", leaf: true, check: true },
];

const viewerRows: Row[] = [
  { level: 0, label: "Inputs", glyph: "folder", open: true },
  { level: 1, label: "Sampling Units", glyph: "folder" },
  { level: 1, label: "Anthropogenic Datasets", glyph: "folder", open: true },
  { level: 2, label: "Canals and Ditches", glyph: "path", leaf: true },
  { level: 2, label: "Land Ownership", glyph: "area", leaf: true },
  { level: 2, label: "Roads", glyph: "path", leaf: true, current: true },
  { level: 2, label: "Railroads", glyph: "path", leaf: true },
];

const qrisRows: Row[] = [
  { level: 3, label: "Valley Bottom", glyph: "yellowBox", leaf: true },
  { level: 2, label: "Surfaces", glyph: "folder", open: true },
  { level: 3, label: "Ortho_WallCrk_04_11_2025_5cm", glyph: "checker", leaf: true },
  { level: 2, label: "AOIs", glyph: "folder", open: true },
  { level: 3, label: "ProjectExtent", glyph: "redBox", leaf: true },
  { level: 3, label: "Contributing Basin_PrjectOutlet", glyph: "redBox", leaf: true },
  { level: 2, label: "Sample Frames", glyph: "folder", open: true },
  { level: 3, label: "Sample Frame", glyph: "frames", leaf: true },
  { level: 3, label: "Sample Frame 1000m", glyph: "frames", leaf: true },
  { level: 2, label: "Profiles", glyph: "folder", open: true },
  { level: 3, label: "Centerline", glyph: "path", leaf: true },
  { level: 2, label: "Cross Sections", glyph: "folder", open: true },
  { level: 3, label: "Cross Sections", glyph: "path", leaf: true },
  { level: 3, label: "Cross Sections 1000m", glyph: "path", leaf: true },
  { level: 2, label: "Context", glyph: "folder" },
  { level: 1, label: "Data Capture Events", glyph: "folder", open: true },
  { level: 2, label: "2025 Assessment", glyph: "calendar", open: true, current: true },
  { level: 3, label: "Geomorphic Units", glyph: "area", leaf: true },
  { level: 3, label: "Assessments", glyph: "folder", open: true },
  { level: 4, label: "Risk Potential", glyph: "folder", open: true },
  { level: 5, label: "Risk Potential", glyph: "path", leaf: true },
  { level: 5, label: "Risk Potential", glyph: "dot", leaf: true },
  { level: 5, label: "Risk Potential", glyph: "area", leaf: true },
  { level: 4, label: "Recovery Potential", glyph: "area", leaf: true },
  { level: 3, label: "Active Confining Margins", glyph: "path", leaf: true },
  { level: 3, label: "Observations", glyph: "folder", open: true },
  { level: 4, label: "Structural Elements", glyph: "folder", open: true },
  { level: 5, label: "Structural Elements", glyph: "dot", leaf: true },
  { level: 5, label: "Structural Elements (Editing)", glyph: "path", leaf: true, style: BOLD },
  { level: 4, label: "Hydraulic Mapping", glyph: "folder", open: true },
  { level: 5, label: "Inundation Extents (Empty)", glyph: "area", leaf: true, style: "italic" },
  { level: 2, label: "2025 LTPBR Planning", glyph: "bulb" },
  { level: 1, label: "Analyses", glyph: "folder" },
];

function Tree({ rows, step = 20, checks = false }: { rows: Row[]; step?: number; checks?: boolean }) {
  return (
    <ul className="min-w-0 flex-1">
      {rows.map((row, i) => (
        <li key={i} className={`flex h-[21px] items-center gap-1.5 pr-1.5 ${row.current ? "bg-[#efefef]" : ""}`}>
          <span className="shrink-0" style={{ width: Math.max(row.level * step - 6, 0), marginRight: row.level ? 0 : -6 }} />
          <span className="grid w-3.5 shrink-0 place-items-center">
            {row.leaf ? null : <Caret className={row.open ? "scale-90" : "-rotate-90 scale-90"} />}
          </span>
          {checks ? row.check === undefined ? <span className="w-3.5 shrink-0" /> : <Check on={row.check} label={row.label} /> : null}
          <svg viewBox="0 0 16 16" className="size-4 shrink-0" aria-hidden="true">{glyphs[row.glyph]}</svg>
          <span className={`leading-5 whitespace-nowrap ${row.style ?? ""}`}>{row.label}</span>
          {row.filter ? (
            <button type="button" aria-label={`Filter ${row.label}`} className="ml-auto grid size-[18px] shrink-0 place-items-center rounded-xs border border-[#dadada] bg-[#f6f6f6]">
              <svg viewBox="0 0 12 12" className="size-3"><path d="M0.5 0.5h11v2l-4 4v5l-3-1.5v-3.5l-4-4z" fill="#e4e4e4" stroke="#777" /></svg>
            </button>
          ) : null}
        </li>
      ))}
    </ul>
  );
}

/* ---------- map canvas ---------- */

const shadows: number[][] = [
  [8, 105, 22, 60], [10, 310, 34, 40], [45, 240, 30, 20], [30, 30, 30, 24], [75, 445, 32, 60], [130, 440, 24, 30],
  [285, 480, 14, 46], [475, 478, 12, 34], [486, 590, 22, 40], [530, 600, 22, 44], [612, 600, 12, 16], [815, 455, 32, 44], [905, 450, 34, 50],
  [975, 450, 24, 60], [920, 540, 20, 60], [760, 480, 12, 34], [985, 250, 20, 26], [990, 330, 16, 20], [20, 540, 14, 40],
  [935, 602, 12, 30], [905, 560, 12, 36], [995, 570, 10, 40], [660, 720, 30, 26], [450, 610, 12, 40], [20, 180, 26, 24], [918, 680, 7, 14],
  [418, 655, 8, 14],
];

const trees: number[][] = [
  [32, 25, 24, 18], [40, 60, 22, 14], [30, 85, 20, 16], [40, 150, 18, 14], [10, 290, 22, 18], [128, 440, 9, 30], [158, 445, 9, 20],
  [92, 474, 14, 18], [118, 500, 17, 17], [144, 470, 12, 18], [46, 474, 9, 12], [27, 591, 11, 11], [291, 489, 10, 10], [540, 426, 28, 18],
  [600, 425, 34, 20], [612, 452, 30, 20], [484, 496, 13, 13], [440, 630, 12, 28], [497, 612, 10, 10], [752, 494, 8, 22], [769, 482, 8, 10],
  [833, 508, 21, 24], [850, 455, 14, 14], [888, 450, 14, 22], [926, 472, 16, 20], [968, 440, 12, 14], [955, 570, 16, 18], [930, 530, 9, 14],
  [866, 510, 8, 12], [880, 520, 9, 10], [968, 596, 9, 9], [1000, 520, 8, 16], [996, 215, 14, 12], [997, 305, 14, 12], [967, 535, 6, 8],
  [33, 225, 10, 10], [920, 700, 7, 7], [891, 658, 6, 8], [934, 666, 10, 9], [952, 725, 7, 8],
];

function MapCanvas() {
  return (
    <svg viewBox="0 0 1006 762" preserveAspectRatio="xMidYMid slice" className="absolute inset-0 size-full" role="img" aria-label="Aerial imagery of Wall Creek">
      <defs>
        <filter id="rough" x="-5%" y="-5%" width="110%" height="110%" colorInterpolationFilters="sRGB">
          <feTurbulence type="fractalNoise" baseFrequency="0.07" numOctaves="4" seed="4" />
          <feDisplacementMap in="SourceGraphic" scale="30" xChannelSelector="R" yChannelSelector="G" />
          <feGaussianBlur stdDeviation="1" />
        </filter>
        <filter id="grain" x="0" y="0" width="100%" height="100%" colorInterpolationFilters="sRGB">
          <feTurbulence type="fractalNoise" baseFrequency="0.4" numOctaves="3" seed="9" />
          <feColorMatrix values="0.9 0.7 0 0 -0.28  0.9 0.7 0 0 -0.28  0.9 0.7 0 0 -0.28  0 0 0 0 1" />
        </filter>
        <filter id="clump" x="0" y="0" width="100%" height="100%" colorInterpolationFilters="sRGB">
          <feTurbulence type="fractalNoise" baseFrequency="0.035" numOctaves="5" seed="21" />
          <feColorMatrix values="0.9 0.6 0 0 -0.25  0.9 0.6 0 0 -0.25  0.9 0.6 0 0 -0.25  0 0 0 0 1" />
        </filter>
      </defs>
      <rect width="1006" height="762" fill="#857d70" />
      <g filter="url(#rough)">
        <path d="M0 640Q120 590 260 660 340 640 440 680L480 780H-20V640z" fill="#8f8b7a" />
        <path d="M0 660Q100 640 210 680L240 790H-10z" fill="#98947f" />
        <path d="M790 645q90-20 230 20V780H690q20-90 100-135z" fill="#989480" />
        <path d="M960 0h60v80h-60z" fill="#8c7459" />
        <path d="M950 76h70v36h-70z" fill="#b8ab96" />
        <path d="M950 120h70v140h-70z" fill="#7a7358" />
        <path d="M470 390h150v90H470z" fill="#8a886f" />
        <path d="M655 480q60 10 110-70h-110z" fill="#6d7550" />
        <path d="M690 470q60-20 90-60h-30q-20 40-70 50z" fill="#58703f" />
        <path d="M850 560q80-20 170 10v80q-100 0-200-10z" fill="#5a5551" />
        <path d="M640 590q90-10 170 40l-60 60-120 10z" fill="#5e554f" />
        <path d="M450 650h340q10 60-90 120H560q30-60-110-120z" fill="#5a534c" />
        <path d="M210 405h90v110h-70z" fill="#57524d" />
        <path d="M0 390h50v110H0z" fill="#5e584f" />
        <path d="M120 560q140-20 280-10v20H80z" fill="#55504a" />
        <path d="M400 560q100-20 180 0 160-24 240-20l40-10-6 40-40 60-60-20q-60-20-180-22H400z" fill="#3b4038" />
        <path d="M590 722h70l-30 34z" fill="#22221f" />
        {shadows.map(([x, y, rx, ry]) => (
          <ellipse key={`${x}-${y}`} cx={x} cy={y} rx={rx} ry={ry} fill="#2a2824" fillOpacity="0.85" transform={`rotate(-14 ${x} ${y})`} />
        ))}
        {trees.map(([x, y, rx, ry]) => (
          <g key={`${x}-${y}`}>
            <ellipse cx={x} cy={y} rx={rx} ry={ry} fill="#455c2c" />
            <ellipse cx={x! - 2} cy={y! - 3} rx={rx! * 0.65} ry={ry! * 0.65} fill="#66823f" />
          </g>
        ))}
      </g>
      <rect width="1006" height="762" filter="url(#clump)" className="mix-blend-overlay" opacity="0.6" />
      <rect width="1006" height="762" filter="url(#grain)" className="mix-blend-overlay" opacity="0.85" />
      <g fill="none" stroke="#f6ee10" strokeWidth="3" strokeDasharray="9 8">
        <path d="M0 271q30 2 62 20" />
        <path d="M384 419l27 8 45 17 38 20 26 6 96-5 19-18 28-29" />
        <path d="M962 316l44 9" />
      </g>
      <path d="M825 534l34 7 28 1" fill="none" stroke="#ddd" strokeWidth="1.5" />
      <path d="M859 540l-10 29-22 18-15 22-15 18-12 11" fill="none" stroke="#222" strokeWidth="5" />
      <path d="M859 540l-10 29-22 18-15 22-15 18-12 11" fill="none" stroke="#fcc440" strokeWidth="4" strokeDasharray="8 4" />
    </svg>
  );
}

/* ---------- dialog ---------- */

const available = [
  "SEM Cluer & Thorne", "Vegetation Extents", "Observations (Point)", "Observations (Linestring)", "Observations (Polygon)",
  "Structural Elements (Point)", "Structural Elements (Linestring)", "Structural Elements (Polygon)", "Recovery Potential",
  "Risk Potential (Point)", "Risk Potential (Linestring)",
];

const inUse = [
  "Geomorphic Units", "Risk Potential", "Risk Potential", "Recovery Potential", "Risk Potential", "Active Confining Margins",
  "Structural Elements", "Structural Elements", "Inundation Extents",
];

const dialogTabs = ["Basic Properties", "Surfaces", "Description", "Metadata"];

function PushButton({ children, className = "" }: { children: ReactNode; className?: string }) {
  return (
    <button type="button" className={`h-[27px] rounded-xs border border-[#ababab] bg-linear-to-b from-white to-[#f0f0f0] whitespace-nowrap ${className}`}>
      {children}
    </button>
  );
}

function Dialog() {
  return (
    <div role="dialog" aria-label="Edit Data Capture Event" className="absolute top-[232px] left-[502px] w-[903px] rounded-lg border border-[#b0b0b0] bg-[#efefef] pb-[10px] shadow-[0_4px_28px_rgba(0,0,0,0.55)]">
      <div className="flex h-7 items-center gap-1.5 rounded-t-lg bg-linear-to-r from-[#edf4f3] to-[#f7eff5] pr-2 pl-[7px]">
        <svg viewBox="0 0 16 16" className="size-4" aria-hidden="true">
          <circle cx="8" cy="8" r="6" fill="none" stroke="#6aaa28" strokeWidth="3" />
          <circle cx="8" cy="8" r="2" fill="#f08028" />
          <path d="M9 9l6 6" stroke="#4a8a1c" strokeWidth="3" />
        </svg>
        <h2 className="font-['Open_Sans',sans-serif] text-[11px]">Edit Data Capture Event</h2>
        <button type="button" aria-label="Close" className="ml-auto">
          <svg viewBox="0 0 12 12" className="size-3"><path d="M1 1l10 10M11 1L1 11" stroke="#222" /></svg>
        </button>
      </div>
      <div className="px-2.5 pt-3">
        <div className="flex items-center gap-1">
          <label htmlFor="dce-name">Name</label>
          <input id="dce-name" defaultValue="2025 Assessment" className="h-[27px] min-w-0 flex-1 rounded-xs border border-[#ababab] bg-white px-0.5" />
        </div>
        <div role="tablist" className="mt-1.5 flex h-[30px] items-end">
          <button type="button" role="tab" aria-selected="true" className="relative z-10 -mb-px h-[31px] w-[70px] rounded-t-xs border border-b-0 border-[#ababab] bg-[#fcfcfc]">Layers</button>
          {dialogTabs.map((tab) => (
            <button key={tab} type="button" role="tab" className="h-7 border-t border-r border-[#b8b8b8] bg-[#e8e8e8] px-[9px]">{tab}</button>
          ))}
        </div>
        <div className="flex gap-1.5 border border-[#ababab] bg-[#fcfcfc] px-2.5 pt-2.5 pb-[9px]">
          <div className="min-w-0 flex-1">
            <div className="h-6 leading-5">Available Layers</div>
            <div className="flex h-[205px] border border-[#ababab] bg-white">
              <ul className="min-w-0 flex-1 overflow-hidden">
                {available.map((name) => {
                  const picked = name === "Structural Elements (Linestring)";
                  return (
                    <li key={name} className={`h-[19px] pl-[41px] ${picked ? "bg-[#0078d7] text-[#cfe6fb]" : ""}`}>
                      <span className={`block h-[19px] pl-0.5 leading-[19px] whitespace-nowrap ${picked ? "bg-[#1a85db]" : ""}`}>{name}</span>
                    </li>
                  );
                })}
              </ul>
              <ScrollBar before="h-[84px]" thumb="h-7" after="flex-1" />
            </div>
          </div>
          <div className="flex w-[143px] shrink-0 flex-col gap-1.5 pt-[33px]">
            <PushButton>Add &gt;&gt;</PushButton>
            <PushButton>Add From DCE &gt;&gt;</PushButton>
            <PushButton className="mt-[34px]">&lt;&lt; Remove</PushButton>
            <PushButton>&lt;&lt; Remove All</PushButton>
          </div>
          <div className="min-w-0 flex-1">
            <div className="h-6 leading-5">Layers In Use</div>
            <ul className="h-[205px] border border-[#ababab] bg-white">
              {inUse.map((name, i) => <li key={i} className="h-[19px] pl-[3px] leading-[19px]">{name}</li>)}
            </ul>
          </div>
        </div>
        <label className="mt-[11px] flex h-[18px] items-center gap-1.5">
          <Check on={false} label="Add New Layers to Map" />
          Add New Layers to Map
        </label>
        <div className="mt-[9px] flex gap-1.5">
          <PushButton className="w-20">Help</PushButton>
          <PushButton className="ml-auto w-20 border-[#3c9bea] to-[#e4eaf0]">OK</PushButton>
          <PushButton className="w-20">Cancel</PushButton>
        </div>
      </div>
    </div>
  );
}

/* ---------- callouts drawn over the screen ---------- */

function Callouts() {
  return (
    <div className="pointer-events-none absolute inset-0 font-['Liberation_Sans',Arial,sans-serif] text-[21px] leading-6 text-[#333]">
      <svg viewBox="0 0 1940 1053" className="absolute top-0 left-0 h-[1053px] w-[1940px] drop-shadow-[2px_4px_3px_rgba(0,0,0,0.65)]" aria-hidden="true">
        <path d="M496 757H733L863 500 773 757H828Q840 757 840 769V790L1497 626 840 827V907Q840 919 828 919H496Q484 919 484 907V769Q484 757 496 757Z" fill="#ffffb8" stroke="#555" strokeWidth="1.5" />
        <path d="M897 860H1099Q1111 860 1111 872V919L1198 891 1111 932V937L1543 876 1111 949V957Q1111 969 1099 969H897Q885 969 885 957V872Q885 860 897 860Z" fill="#ffffb8" stroke="#555" strokeWidth="1.5" />
      </svg>
      <p className="absolute top-[757px] left-[484px] grid h-[162px] w-[356px] content-center pt-1 text-center">
        <span>Right click 2025 Assessment DCE</span>
        <span>and click proprties. Select any</span>
        <span>other relavant layers and add them</span>
        <span>to your DCE</span>
      </p>
      <p className="absolute top-[860px] left-[885px] grid h-[109px] w-[226px] content-center text-center">
        <span>As with the other</span>
        <span>layers add to map</span>
        <span>and digitize</span>
      </p>
      <div className="absolute top-[856px] left-[1561px] h-[37px] w-[298px] border-[5px] border-[#fe0000] shadow-[3px_4px_5px_rgba(0,0,0,0.6),inset_2px_3px_3px_rgba(0,0,0,0.4)]" />
    </div>
  );
}

/* ---------- torn paper outline ---------- */

function tornEdge() {
  let seed = 17;
  const rnd = () => {
    seed = (seed * 16807) % 2147483647;
    return seed / 2147483647;
  };
  const side = (length: number) => {
    const out: [number, number][] = [];
    let at = 1.3;
    let deep = false;
    while (at < 98.7) {
      const depth = deep ? 7 + rnd() * 5 : rnd() * 3;
      out.push([at, depth]);
      at += ((deep ? 5 : 8) + rnd() * 8) * (100 / length) * (rnd() > 0.7 ? 0.4 : 1);
      deep = !deep;
    }
    return out;
  };
  const top = side(1940).map(([p, d]) => `${p.toFixed(2)}% ${(17 + d).toFixed(0)}px`);
  const right = side(1053).filter(([p]) => p > 2.5 && p < 97).map(([p, d]) => `calc(100% - ${(17 + d).toFixed(0)}px) ${p.toFixed(2)}%`);
  const bottom = side(1940).reverse().map(([p, d]) => `${p.toFixed(2)}% calc(100% - ${(18 + d).toFixed(0)}px)`);
  const left = side(1053).filter(([p]) => p > 2.5 && p < 97).reverse().map(([p, d]) => `${(16 + d).toFixed(0)}px ${p.toFixed(2)}%`);
  return `polygon(${[...top, ...right, ...bottom, ...left].join(",")})`;
}

const outline = tornEdge();

const menus = ["_Project", "_Edit", "_View", "_Layer", "_Settings", "_Plugins", "Vect_or", "_Raster", "_Database", "_Web", "_Mesh", "Pro_cessing", "_Help"];

function MenuLabel({ text }: { text: string }) {
  const at = text.indexOf("_");
  return (
    <button type="button" className="shrink-0">
      {text.slice(0, at)}
      <span className="underline underline-offset-3">{text[at + 1]}</span>
      {text.slice(at + 2)}
    </button>
  );
}

function TextMenu({ children }: { children: string }) {
  return (
    <button type="button" className="flex shrink-0 items-center gap-2.5 pr-[5px] pl-1">
      {children}
      <Caret />
    </button>
  );
}

export default function App() {
  return (
    <div className="relative min-h-screen overflow-hidden bg-white font-['DejaVu_Sans_Condensed','Noto_Sans',sans-serif] text-base leading-5 text-black">
      <div className="drop-shadow-[3px_5px_3px_rgba(0,0,0,0.6)]">
        <div className="flex min-h-screen flex-col bg-[#efefef]" style={{ clipPath: outline }}>
          <div className="flex h-[33px] items-center gap-2 bg-[#f3f3f3] pt-2 pl-[22px] font-['Open_Sans',sans-serif] text-xs text-[#777]">
            <span className="size-3 rounded-full border-[3px] border-[#6aaa28]" />
            Untitled Project - QGIS
          </div>
          <nav className="flex h-6 items-center gap-3 border-b border-[#cfcfcf] pl-[22px] text-[#9a9a9a]">
            {menus.map((text) => <MenuLabel key={text} text={text} />)}
          </nav>
          <Bar><Tools items={projectTools} /></Bar>
          <Bar><Tools items={editTools} /></Bar>
          <Bar>
            <Tools items={shapeTools} />
            <span className="flex h-[26px] w-[110px] shrink-0 items-center rounded-xs border border-[#ababab] bg-white">
              <input aria-label="Snapping tolerance" defaultValue="5" className="w-0 min-w-0 flex-1 pl-1" />
              <svg viewBox="0 0 14 11" className="mr-2.5 h-[11px] w-3.5"><path d="M4 0h10v11H4L0 5.5z" fill="#999" /><path d="M6 3l5 5M11 3L6 8" stroke="#fff" strokeWidth="1.5" /></svg>
              <Spinner />
            </span>
            <span className="relative ml-px flex w-[115px] shrink-0 items-center">
              <select aria-label="Tolerance units" className="h-[26px] w-full appearance-none rounded-xs border border-[#ababab] bg-linear-to-b from-white to-[#f2f2f2] pl-1">
                <option>px</option>
              </select>
              <Caret className="pointer-events-none absolute right-1.5" />
            </span>
            <Tools items={snapTools} />
          </Bar>
          <div className="flex h-[46px] items-center gap-px overflow-hidden border-b border-[#b9b9b9] bg-linear-to-b from-[#fafafa] to-[#efefef] pl-[23px]">
            <Tools items={[t("Select region"), t("Voxel cube"), t("Tile grid"), "grip"]} />
            <Chip text="AD" className="bg-[#ffc0cb] font-bold text-[#f01818]" />
            <Chip text="MO" className="bg-[#dfe8df] text-[#c2d2c2]" />
            <Chip text="RO" className="bg-[#beb4c4] text-[#a498ac]" />
            <span className="flex h-[25px] w-[94px] shrink-0 items-center rounded-xs border border-[#ababab] bg-[#f6f6f6]">
              <input aria-label="Rotation value" defaultValue="0.000" className="w-0 min-w-0 flex-1 pl-1 text-[#888]" />
              <Spinner />
            </span>
            <Chip text="SC" className="bg-[#dadbc6] text-[#b8baa0]" />
            <Chip text="ADJ" className="bg-[#c8c0c0] text-[#f2f2f2]" />
            <Chip text="2P" className="bg-[#d0d8d8] text-[#d8c4c4]" />
            <Chip text="T-" className="bg-[#f0f0f0] text-[#aaa]" />
            <Chip text="T+" className="bg-[#999] text-[#e4e4e4]" />
            <Chip text="!!" className="bg-[#d2dacc] text-[#e0bcbc]" />
            <span className="mx-2 grid size-6 shrink-0 place-items-center bg-[#b4b6c0]">
              <svg viewBox="0 0 32 32" className="size-6" aria-hidden="true"><path d="M2 12l12-9v6q15 0 14 20-4-10-14-10v6z" fill="#dcdce4" /></svg>
            </span>
            <Grip />
            <Tools items={[t("Riverscapes project")]} />
            <span className="w-1" />
            <TextMenu>Project</TextMenu>
            <TextMenu>Help</TextMenu>
            <Grip />
            <Tools items={[t("Riverscapes layers"), t("Open external"), t("Close project"), t("Riverscapes tools")]} />
            <span className="w-0.5" />
            <TextMenu>Tools</TextMenu>
            <TextMenu>Help</TextMenu>
          </div>

          <main className="flex flex-1">
            <aside className="flex w-[435px] shrink-0 flex-col pl-[13px]">
              <header className="flex h-6 items-center justify-between pr-px">
                <h2>Layers</h2>
                <DockButtons />
              </header>
              <div className="flex h-[37px] items-center gap-2 pb-1 pl-[7px]">
                <svg viewBox="0 0 24 24" className="size-6"><path d="M21 3l-8 9" stroke="#a87820" strokeWidth="3" /><path d="M3 9l11 5-5 8-7-3z" fill="#f0b43c" stroke="#a06a10" /><path d="M8 9l8 7" stroke="#d84a3a" strokeWidth="2" /></svg>
                <svg viewBox="0 0 24 24" className="size-6"><path d="M2 8v13h13M5 5h13v13H5zM9 3h11v12" fill="none" stroke="#777" strokeWidth="1.5" /><path d="M12 17V4q0-3 2-3t2 3v11" fill="none" stroke="#4a6a96" strokeWidth="1.5" /><rect x="14" y="15" width="9" height="9" fill="#5a945a" /><path d="M18.5 17v5M16 19.5h5" stroke="#fff" strokeWidth="1.5" /></svg>
                <svg viewBox="0 0 26 24" className="h-6 w-[26px]"><path d="M1 12q11-11 22 0-11 10-22 0z" fill="#f4f4f4" stroke="#888" strokeWidth="1.5" /><circle cx="12" cy="11.5" r="5" fill={BLUE} /><circle cx="12" cy="11.5" r="2.2" fill="#112233" /><path d="M19 20h6l-3 3z" fill="#555" /></svg>
                <svg viewBox="0 0 26 24" className="h-6 w-[26px]"><path d="M1 5h19l-7 8v10H8V13z" fill={BLUE} stroke="#3c5f88" /><path d="M1 1h19v4H1z" fill="#f5e33c" stroke="#b0a020" /><path d="M19 20h6l-3 3z" fill="#555" /></svg>
                <svg viewBox="0 0 34 24" className="h-6 w-[34px]"><path d="M10 4Q3 0 2 4.5 2 8 7 8 1 8 1 12q1 4 9 1.5" fill="none" stroke="#6c4a78" strokeWidth="2.4" /><path d="M11 11h11v3h-1v10h-3v-8h-3v8h-3V14h-1z" fill="#999" /><path d="M26 9h8l-4 4z" fill="#555" /></svg>
                <svg viewBox="0 0 24 24" className="size-6"><path d="M1 3h17M4 3v18M4 10h4M4 18h4" stroke="#999" fill="none" /><path d="M6 7h5v5H6zM6 15h5v5H6z" fill="#f0a020" /><path d="M14 2h5v12h4l-6.5 8L10 14h4z" fill={BLUE} stroke="#3c5f88" /></svg>
                <svg viewBox="0 0 24 24" className="size-6"><path d="M1 3h17M4 3v18M4 10h4M4 18h4" stroke="#999" fill="none" /><path d="M6 7h5v5H6zM6 15h5v5H6z" fill="#f0a020" /><path d="M14 22h5V9h4L16.5 1 10 9h4z" fill={BLUE} stroke="#3c5f88" /></svg>
                <svg viewBox="0 0 24 24" className="ml-0.5 size-6"><rect x="1.5" y="2.5" width="18" height="17" fill="#f6f6f6" stroke="#888" strokeWidth="1.5" /><rect x="14" y="15" width="9" height="7" rx="1" fill="#e04848" /><path d="M16 18.5h5" stroke="#fff" strokeWidth="2" /></svg>
              </div>
              <div className="flex border border-[#b4b4b4] bg-white">
                <Tree rows={layerRows} checks />
                <ScrollBar before="h-0" thumb="flex-1" after="h-[18px]" />
              </div>
              <div className="mx-auto my-0.5 h-[3px] w-4 bg-[radial-gradient(#b4b4b4_1px,transparent_1px)] bg-size-[3px_3px]" />
              <header className="flex h-[26px] items-center justify-between pr-px">
                <h2>Riverscapes Viewer</h2>
                <DockButtons />
              </header>
              <div className="mb-1 flex h-0 grow overflow-hidden border border-[#b4b4b4] bg-white">
                <div className="min-w-0 flex-1 pl-[10px]"><Tree rows={viewerRows} step={15} /></div>
                <ScrollBar before="h-4" thumb="h-[33px]" after="flex-1" />
              </div>
            </aside>

            <section className="relative ml-2 min-w-0 flex-1 overflow-hidden border border-[#b4b4b4]">
              <MapCanvas />
            </section>

            <aside className="flex w-[491px] shrink-0 flex-col pr-[19px] pl-4">
              <header className="mb-2 -ml-1 flex h-[23px] items-center justify-between">
                <h2>QRiS Plugin</h2>
                <span className="-mr-2"><DockButtons /></span>
              </header>
              <div className="flex border border-[#b4b4b4] bg-white">
                <div className="min-w-0 flex-1 pl-[3px]"><Tree rows={qrisRows} /></div>
                <ScrollBar before="h-[44px]" thumb="h-[472px]" after="flex-1" />
              </div>
              <div role="tablist" className="mt-[10px] -mr-5 -ml-[9px] flex h-7 items-start border-t border-[#b8b8b8]">
                <button type="button" role="tab" aria-selected="true" className="-mt-px h-7 w-[109px] rounded-b-xs border border-t-0 border-[#ababab] bg-[#f4f4f4]">QRiS Plugin</button>
                <button type="button" role="tab" className="h-[26px] w-[163px] border-r border-b border-[#b8b8b8] bg-[#dedede]">Processing Toolbox</button>
                <button type="button" role="tab" className="h-[26px] w-20 rounded-br-xs border-r border-b border-[#b8b8b8] bg-[#dedede]">Browser</button>
              </div>
            </aside>
          </main>

          <footer className="flex h-[45px] items-start pt-1 pr-4 pl-[15px]">
            <span className="flex h-[31px] w-[290px] items-center gap-2.5 rounded-xs border border-[#ababab] bg-white pl-1.5">
              <svg viewBox="0 0 12 12" className="size-3"><circle cx="7" cy="5" r="4" fill="none" stroke="#777" strokeWidth="1.5" /><path d="M4 8l-4 4" stroke="#777" strokeWidth="1.5" /></svg>
              <input aria-label="Type to locate" placeholder="Type to locate (Ctrl+K)" className="min-w-0 flex-1 placeholder:text-[#888]" />
            </span>
            <div className="ml-auto flex h-7 items-center text-sm">
              <label htmlFor="coordinate" className="mr-1">Coordinate</label>
              <input id="coordinate" defaultValue="-13303399.5, 5610307.3" className="h-7 w-[174px] rounded-xs border border-[#ababab] bg-white px-1.5" />
              <svg viewBox="0 0 16 16" className="mr-3.5 ml-1 size-4"><path d="M4 2q-4 6 0 12M7 1q-4 7 0 14M10 3q-4 5-1 9M2 2l12 12M14 2L8 12" fill="none" stroke="#555" strokeWidth="1.5" /></svg>
              <label htmlFor="scale" className="mr-1">Scale</label>
              <span className="flex h-7 w-[106px] items-center rounded-xs border border-[#ababab] bg-white">
                <input id="scale" defaultValue="1:1218" className="min-w-0 flex-1 pl-1" />
                <span className="grid h-full w-5 place-items-center border-l border-[#b4b4b4] bg-[#f7f7f7]"><Caret /></span>
              </span>
              <svg viewBox="0 0 12 16" className="mx-3 h-4 w-3"><path d="M3 8V4q0-3 3-3t3 3v4" fill="none" stroke="#aaa" strokeWidth="1.5" /><rect x="1" y="7" width="10" height="8" fill="#999" /></svg>
              <label htmlFor="magnifier" className="mr-1">Magnifier</label>
              <span className="flex h-7 w-[98px] items-center rounded-xs border border-[#ababab] bg-white">
                <input id="magnifier" defaultValue="100%" className="min-w-0 flex-1 pl-1" />
                <Spinner />
              </span>
              <label htmlFor="rotation" className="mr-2 ml-2.5">Rotation</label>
              <span className="flex h-7 w-[98px] items-center rounded-xs border border-[#ababab] bg-white">
                <input id="rotation" defaultValue="0.0 °" className="min-w-0 flex-1 pl-1" />
                <Spinner />
              </span>
              <label className="ml-2 flex items-center gap-1"><Check on label="Render" />Render</label>
              <svg viewBox="0 0 16 16" className="ml-4 size-4"><path d="M0 10q8-14 16 0M3 10q5-8 10 0M8 2v9M2 6h12M0 10h16" fill="none" stroke="#777" /></svg>
              <button type="button" className="mr-7 ml-0.5">EPSG:3857</button>
              <svg viewBox="0 0 16 16" className="size-4"><circle cx="8" cy="8" r="7" fill="#555" /><path d="M4 8h8" stroke="#fff" strokeWidth="1.5" strokeDasharray="2 1" /></svg>
            </div>
          </footer>
        </div>
      </div>
      <Dialog />
      <Callouts />
    </div>
  );
}
